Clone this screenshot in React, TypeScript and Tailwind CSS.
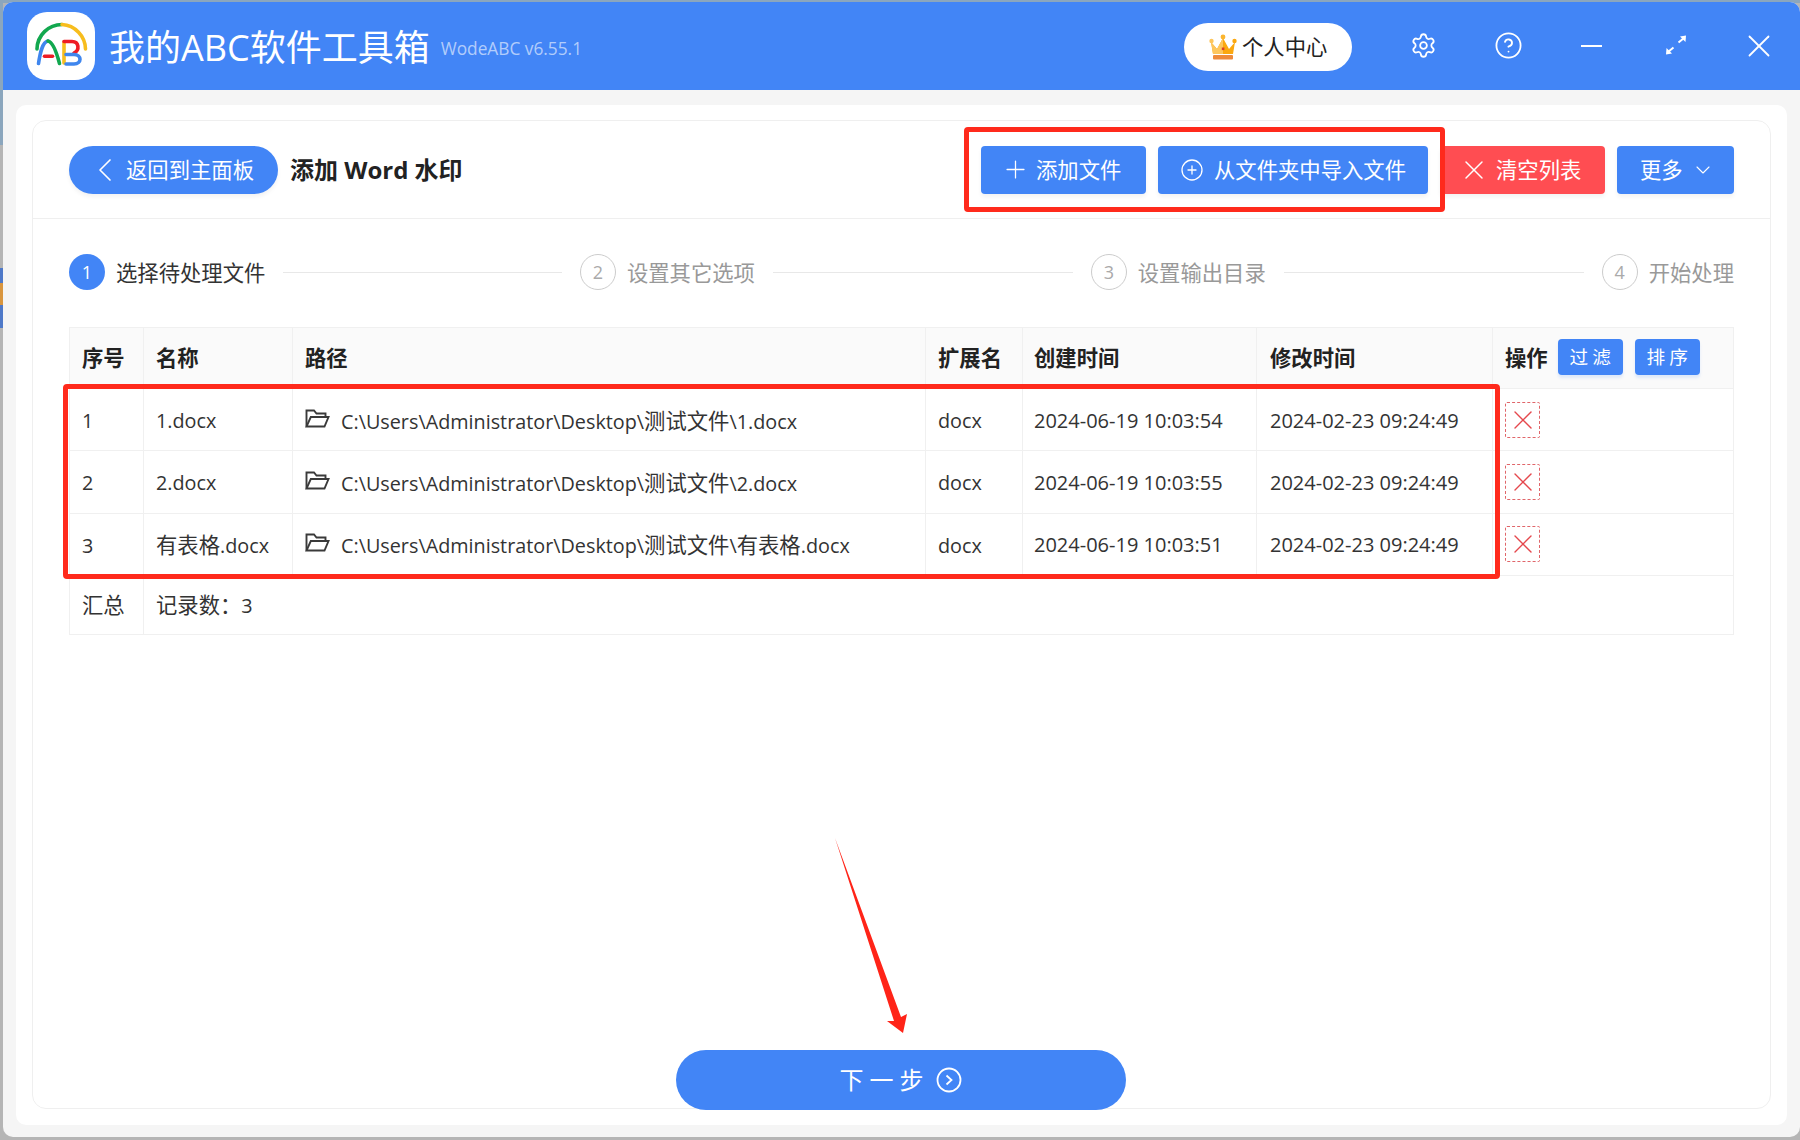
import { Settings, CircleHelp, ChevronLeft, ChevronDown, Plus, CirclePlus, X } from 'lucide-react';

const rows = [
  { no: '1', name: '1.docx', path: 'C:\\Users\\Administrator\\Desktop\\测试文件\\1.docx', created: '2024-06-19 10:03:54' },
  { no: '2', name: '2.docx', path: 'C:\\Users\\Administrator\\Desktop\\测试文件\\2.docx', created: '2024-06-19 10:03:55' },
  { no: '3', name: '有表格.docx', path: 'C:\\Users\\Administrator\\Desktop\\测试文件\\有表格.docx', created: '2024-06-19 10:03:51' },
];

const steps = ['选择待处理文件', '设置其它选项', '设置输出目录', '开始处理'];

// Latin runs sit at about 20px in the table, Chinese runs stay at the full 21.33px
const Mixed = ({ text }: { text: string }) => (
  <>
    {text.split(/([\u3000-\u9fff\uff00-\uffef]+)/).map((part, i) =>
      i % 2 === 1 ? <span key={i} className="text-[21.33px]">{part}</span> : part
    )}
  </>
);

const Logo = () => (
  <svg width="68" height="68" viewBox="0 0 68 68" fill="none" strokeLinecap="round">
    <rect width="68" height="68" rx="20" fill="#fff" />
    <path d="M10 37A25 25 0 0 1 35 12.5" stroke="#12a84f" strokeWidth="3.6" />
    <path d="M35 12.5A25 25 0 0 1 58.5 37" stroke="#f7bd1d" strokeWidth="3.6" />
    <path d="M11.5 51.5C13 42 15 30 21 29" stroke="#3f86ee" strokeWidth="3.6" />
    <path d="M21 29C26 30 30 42 32.5 51.5" stroke="#12a84f" strokeWidth="3.6" />
    <path d="M17.5 44.3H25.5" stroke="#ee1c25" strokeWidth="3.6" />
    <path d="M37 30V51" stroke="#f7bd1d" strokeWidth="3.6" />
    <path d="M37 29.5H45C52 29.5 53 38 47 41" stroke="#ee1c25" strokeWidth="3.6" />
    <path d="M39 42.5H47C55 42.5 55 52 47 52H39" stroke="#3f86ee" strokeWidth="3.6" />
  </svg>
);

const Crown = () => (
  <svg width="28" height="26" viewBox="0 0 28 26">
    <path d="M2 8L8 15L14 4L20 15L26 8L24 20H4Z" fill="#fba80f" />
    <path d="M2 8L8 15L14 4V20H4Z" fill="#fdc65d" />
    <circle cx="2.5" cy="7" r="2.2" fill="#fdc65d" />
    <circle cx="14" cy="3" r="2.4" fill="#fbb52f" />
    <circle cx="25.5" cy="7" r="2.2" fill="#fba80f" />
    <rect x="4" y="21" width="20" height="4.5" rx="1" fill="#ee8a3a" />
    <rect x="12.8" y="13.5" width="2.6" height="2.6" fill="#d9412b" />
  </svg>
);

const ExpandIcon = () => (
  <svg width="22" height="20" viewBox="0 0 22 20" fill="none" stroke="#fff" strokeWidth="2">
    <path d="M3 17L8.5 12.5M13.5 7.5L19 3" />
    <path d="M1 19.5L1.5 13L7 18.5Z" fill="#fff" strokeWidth="0" />
    <path d="M21 0.5L20.5 7L15 1.5Z" fill="#fff" strokeWidth="0" />
  </svg>
);

const FolderIcon = () => (
  <svg width="25" height="19" viewBox="0 0 25 19" fill="none" stroke="#3a3a3a" strokeWidth="1.9" className="shrink-0">
    <path d="M1.5 17.5V1.5H9L11.5 4.5H20.5V8" />
    <path d="M1.5 17.5H19.5L23.5 8H5.8Z" />
  </svg>
);

const TopButton = ({ className, children }: { className: string; children: React.ReactNode }) => (
  <button className={`h-12 rounded-[4px] flex items-center text-white text-[21.33px] shadow-[0_3px_4px_rgba(0,0,0,0.05)] ${className}`}>
    {children}
  </button>
);

export default function App() {
  return (
    <div className="relative w-[1800px] h-[1140px] pl-[3px] pt-[2px] pb-[3px] bg-[#b5b5b5] overflow-hidden font-['Open_Sans','Noto_Sans_CJK_SC',sans-serif] text-[21.33px] text-[#333]">
      {/* bits of the desktop that show behind the window */}
      <div className="absolute left-0 top-0 w-full h-[3px] bg-[#8ba6bd]" />
      <div className="absolute left-0 top-0 w-[3px] h-[145px] bg-[#8ba6bd]" />
      <div className="absolute left-0 top-[268px] w-[3px] h-[60px] bg-[#4f79c8]" />
      <div className="absolute left-0 top-[283px] w-[3px] h-[22px] bg-[#d9963f]" />

      <div className="relative h-full flex flex-col rounded-[10px] overflow-hidden bg-[#f5f5f5]">
        {/* Header */}
        <div className="h-[88px] shrink-0 flex items-center bg-[#4285f6] text-white">
          <div className="ml-[24px] mt-[-1px]"><Logo /></div>
          <span className="ml-[14px] mt-[3px] text-[36px] leading-none">我的ABC软件工具箱</span>
          <span className="ml-[11px] mt-[5px] text-[17.3px] text-white/60">WodeABC v6.55.1</span>
          <div className="ml-auto flex items-center">
            <div className="w-[168px] h-12 rounded-full bg-white flex items-center pl-[25px] gap-[5px] text-[#222] mt-[2px]">
              <Crown />
              <span>个人中心</span>
            </div>
            <Settings size={27} strokeWidth={1.6} className="ml-[58px] mt-[-1px]" />
            <CircleHelp size={29} strokeWidth={1.5} className="ml-[57px] mt-[-1px]" />
            <div className="ml-[58px] w-[21px] h-[2px] bg-white" />
            <div className="ml-[63px] mt-[-2px]"><ExpandIcon /></div>
            <X size={38} strokeWidth={1.15} className="ml-[53px] mr-[22px] mt-[-1px]" />
          </div>
        </div>

        {/* Main */}
        <div className="flex-1 min-h-0 pt-[15px] pl-[13px] pr-[13px] pb-[12px]">
          <div className="h-full rounded-[10px] bg-white pt-[15px] px-[16px] pb-[16px]">
            <div className="h-full rounded-[14px] border border-[#efefef] flex flex-col">
              {/* Toolbar */}
              <div className="h-[98px] shrink-0 border-b border-[#efefef] flex items-center pl-[36px] pr-[36px]">
                <button className="w-[209px] h-12 rounded-full bg-[#4285f6] text-white flex items-center pl-[16px] shadow-[0_3px_4px_rgba(0,0,0,0.05)]">
                  <ChevronLeft size={40} strokeWidth={1} />
                  <span className="ml-[1px]">返回到主面板</span>
                </button>
                <span className="ml-[12px] text-[24px] font-bold text-[#222]">添加 Word 水印</span>
                <div className="ml-auto flex gap-[12px]">
                  <TopButton className="w-[165px] bg-[#4285f6] pl-[20px]">
                    <Plus size={29} strokeWidth={1.05} />
                    <span className="ml-[6px]">添加文件</span>
                  </TopButton>
                  <TopButton className="w-[270px] bg-[#4285f6] pl-[22px]">
                    <CirclePlus size={24} strokeWidth={1.3} />
                    <span className="ml-[10px]">从文件夹中导入文件</span>
                  </TopButton>
                  <TopButton className="w-[165px] bg-[#ff4d52] pl-[18px]">
                    <X size={32} strokeWidth={1.1} />
                    <span className="ml-[6px]">清空列表</span>
                  </TopButton>
                  <TopButton className="w-[117px] bg-[#4285f6] pl-[23px]">
                    <span>更多</span>
                    <ChevronDown size={24} strokeWidth={1.1} className="ml-[8px]" />
                  </TopButton>
                </div>
              </div>

              {/* Steps */}
              <div className="mt-[35px] ml-[36px] mr-[36px] flex items-center">
                {steps.map((label, i) => (
                  <div key={label} className={`flex items-center ${i < 3 ? 'flex-1' : ''}`}>
                    <div className={`w-9 h-9 rounded-full flex items-center justify-center text-[18px] ${i === 0 ? 'bg-[#4285f6] text-white' : 'border border-[#ccc] text-[#aaa]'}`}>
                      {i + 1}
                    </div>
                    <span className={`ml-[11px] mt-[2px] whitespace-nowrap ${i === 0 ? 'text-[#333]' : 'text-[#999]'}`}>{label}</span>
                    {i < 3 && <div className="flex-1 h-px bg-[#e8e8e8] mx-[18px]" />}
                  </div>
                ))}
              </div>

              {/* Table */}
              <table className="mt-[37px] ml-[36px] w-[1664px] table-fixed border-collapse text-left shrink-0 text-[19.8px]">
                <colgroup>
                  <col className="w-[74px]" />
                  <col className="w-[149px]" />
                  <col className="w-[633px]" />
                  <col className="w-[97px]" />
                  <col className="w-[234px]" />
                  <col className="w-[236px]" />
                  <col className="w-[241px]" />
                </colgroup>
                <thead>
                  <tr className="h-[61px] bg-[#fafafa] font-bold text-[#222] text-[21.33px]">
                    {['序号', '名称', '路径', '扩展名', '创建时间', '修改时间'].map((h, i) => (
                      <th key={h} className={`border border-[#f0f0f0] font-bold ${i === 5 ? 'pl-[13px]' : i === 4 ? 'pl-[11px]' : 'pl-[12px]'}`}>{h}</th>
                    ))}
                    <th className="border border-[#f0f0f0] pl-[12px] font-bold">
                      <div className="flex items-center">
                        <span>操作</span>
                        <span className="ml-[10px] w-[65px] h-9 pl-[4px] rounded-[4px] bg-[#4285f6] text-white text-[18.67px] font-normal tracking-[4px] flex items-center justify-center mt-[-3px] shadow-[0_3px_3px_rgba(66,133,246,0.15)]">过滤</span>
                        <span className="ml-[12px] w-[65px] h-9 pl-[4px] rounded-[4px] bg-[#4285f6] text-white text-[18.67px] font-normal tracking-[4px] flex items-center justify-center mt-[-3px] shadow-[0_3px_3px_rgba(66,133,246,0.15)]">排序</span>
                      </div>
                    </th>
                  </tr>
                </thead>
                <tbody>
                  {rows.map(r => (
                    <tr key={r.no} className="h-[62.4px]">
                      <td className="border border-[#f0f0f0] pl-[12px] pt-[2px]">{r.no}</td>
                      <td className="border border-[#f0f0f0] pl-[12px] pt-[2px]"><Mixed text={r.name} /></td>
                      <td className="border border-[#f0f0f0] pl-[12px] pt-[2px]">
                        <div className="flex items-center gap-[11px]">
                          <span className="mt-[-5px]"><FolderIcon /></span>
                          <span><Mixed text={r.path} /></span>
                        </div>
                      </td>
                      <td className="border border-[#f0f0f0] pl-[12px] pt-[2px]">docx</td>
                      <td className="border border-[#f0f0f0] pl-[11px] pt-[2px] text-[20px]">{r.created}</td>
                      <td className="border border-[#f0f0f0] pl-[13px] pt-[2px] text-[20px]">2024-02-23 09:24:49</td>
                      <td className="border border-[#f0f0f0] pl-[12px]">
                        <div className="w-[35px] h-9 rounded-[2px] border border-dashed border-[#e0666a] flex items-center justify-center">
                          <X size={32} strokeWidth={1.05} className="text-[#e5484d] shrink-0" />
                        </div>
                      </td>
                    </tr>
                  ))}
                  <tr className="h-[59px]">
                    <td className="border border-[#f0f0f0] pl-[12px]"><Mixed text="汇总" /></td>
                    <td colSpan={6} className="border border-[#f0f0f0] pl-[12px]"><Mixed text="记录数：3" /></td>
                  </tr>
                </tbody>
              </table>

              {/* Next */}
              <div className="mt-auto mb-[-2px] mr-[2px] flex justify-center">
                <button className="w-[450px] h-[60px] rounded-full bg-[#4285f6] text-white flex items-center justify-center gap-[12px] text-[24px] tracking-[6px]">
                  <span className="-mr-[6px]">下一步</span>
                  <svg width="26" height="26" viewBox="0 0 26 26" fill="none" stroke="#fff" strokeWidth="1.8">
                    <circle cx="13" cy="13" r="11.5" />
                    <path d="M10.5 8.5L15.5 13L10.5 17.5" />
                  </svg>
                </button>
              </div>
            </div>
          </div>
        </div>
      </div>

      {/* Red annotations drawn over the screenshot */}
      <div className="absolute left-[964px] top-[127px] w-[481px] h-[85px] rounded-[4px] border-[5px] border-[#ff2a1c]" />
      <div className="absolute left-[63px] top-[384px] w-[1437px] h-[195px] rounded-[4px] border-[5px] border-[#ff2a1c]" />
      <svg className="absolute left-[830px] top-[835px]" width="85" height="205" viewBox="830 835 85 205">
        <path d="M835 838L901 1017L907 1014L903 1033L887 1021L894 1021Z" fill="#ff2418" />
      </svg>
    </div>
  );
}
